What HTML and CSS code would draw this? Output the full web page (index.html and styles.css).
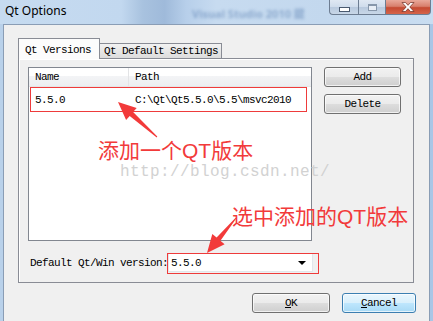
FILE: index.html
```html
<!DOCTYPE html>
<html>
<head>
<meta charset="utf-8">
<link rel="stylesheet" href="styles.css">
</head>
<body>
<div class="window">
  <div class="titlebar">
    <span class="title">Qt Options</span>
    <span class="ghost">Visual Studio 2010 鍵</span>
    <div class="controls">
      <div class="ctl min"><span class="min-glyph"></span></div>
      <div class="ctl max"><span class="max-glyph"></span></div>
      <div class="ctl close">
        <svg width="14" height="10" viewBox="0 0 14 10"><path d="M1 0.5 H4.5 L7 3.3 L9.5 0.5 H13 L8.8 5 L13 9.5 H9.5 L7 6.7 L4.5 9.5 H1 L5.2 5 Z" fill="#fff" stroke="#6b2a20" stroke-width="0.7"/></svg>
      </div>
    </div>
  </div>
  <div class="client">
    <div class="tabwidget">
      <div class="tabbar">
        <div class="tab active">Qt Versions</div>
        <div class="tab">Qt Default Settings</div>
      </div>
      <div class="pane">
        <div class="top-row">
          <div class="list">
            <div class="list-head">
              <div class="hcol c-name">Name</div>
              <div class="hcol c-path">Path</div>
            </div>
            <div class="list-row">
              <div class="c-name">5.5.0</div>
              <div class="c-path">C:\Qt\Qt5.5.0\5.5\msvc2010</div>
            </div>
          </div>
          <div class="side">
            <button class="btn">Add</button>
            <button class="btn">Delete</button>
          </div>
        </div>
        <div class="default-row">
          <span class="label">Default Qt/Win version:</span>
          <div class="combo"><span class="combo-text">5.5.0</span><span class="combo-arrow"></span></div>
        </div>
      </div>
    </div>
    <div class="footer">
      <button class="btn btn-ok"><u>O</u>K</button>
      <button class="btn btn-cancel"><u>C</u>ancel</button>
    </div>
  </div>

  <svg class="overlay" width="433" height="321" viewBox="0 0 433 321">
    <rect x="30.5" y="87.5" width="276" height="24" fill="none" stroke="#ee3b3b" stroke-width="1"/>
    <rect x="167.5" y="253.5" width="151" height="20" fill="none" stroke="#ee3b3b" stroke-width="1"/>
    <polygon fill="#f23a3a" points="118,102 136.7,108.1 133.1,112.1 157.3,136.6 156.7,137.4 129.7,115.9 126.1,119.9"/>
    <polygon fill="#f23a3a" points="207,253 212.3,234.1 216.6,237.6 235.6,217.7 236.4,218.3 220.4,240.8 224.6,244.3"/>
  </svg>
  <div class="note note-1">添加一个QT版本</div>
  <div class="note note-2">选中添加的QT版本</div>
  <div class="watermark">http://blog.csdn.net/</div>
</div>
</body>
</html>
```
FILE: styles.css
```css
html, body {
  margin: 0;
  padding: 0;
}
body {
  background: #f0f0f0;
}
.window {
  position: relative;
  width: 433px;
  height: 321px;
  overflow: hidden;
  background: linear-gradient(90deg, #b9d1ea 0%, #a9c6e6 100%);
}
.titlebar {
  position: relative;
  height: 24px;
  display: flex;
  align-items: flex-start;
  background: linear-gradient(90deg, #c6dbf0 0%, #c2d8ef 28%, #a8c2df 33%, #9fbada 38%, #b7cfea 43%, #c7dbf0 50%, #c3d8ee 75%, #c9ddf1 100%);
}
.title {
  font-family: "Noto Sans", "Open Sans", sans-serif;
  font-size: 12px;
  line-height: 16px;
  margin: 3px 0 0 5px;
  color: #000;
}
.ghost {
  position: absolute;
  left: 192px;
  top: 5px;
  font-family: "Noto Sans", "Noto Sans CJK SC", sans-serif;
  font-size: 11px;
  font-weight: bold;
  color: rgba(40, 85, 150, 0.35);
  filter: blur(1.4px);
}
.controls {
  margin-left: auto;
  margin-right: 2px;
  display: flex;
  height: 15px;
  position: relative;
}
.ctl {
  height: 15px;
  box-sizing: border-box;
  border: 1px solid #6d7d92;
  border-top: none;
  display: flex;
  align-items: center;
  justify-content: center;
}
.min {
  width: 29px;
  border-bottom-left-radius: 4px;
  border-right: none;
  background: linear-gradient(#dfe8f3 0%, #cfdcec 50%, #b8c9de 51%, #c8d7e8 100%);
}
.max {
  width: 27px;
  border-right: none;
  background: linear-gradient(#dfe8f3 0%, #cfdcec 50%, #b8c9de 51%, #c8d7e8 100%);
}
.close {
  width: 46px;
  border-bottom-right-radius: 4px;
  background: linear-gradient(#e9a99a 0%, #d8806d 45%, #c54a32 55%, #d5644a 100%);
}
.min-glyph {
  width: 9px;
  height: 3px;
  margin-top: 4px;
  background: #fff;
  border: 1px solid #4a5a70;
}
.max-glyph {
  width: 7px;
  height: 5px;
  border: 1px solid #8797ab;
  background: #e8eef6;
  box-shadow: inset 0 1px 0 #8797ab;
}
.client {
  margin: 0 3px;
  height: 297px;
  border: 1px solid #8a9db5;
  border-bottom: none;
  background: #f0f0f0;
  padding: 13px 0 0 14px;
  box-sizing: border-box;
  font-family: "Liberation Mono", monospace;
  font-size: 11px;
  letter-spacing: -0.6px;
  color: #000;
}
.tabwidget {
  width: 396px;
}
.tabbar {
  display: flex;
  align-items: flex-end;
  height: 21px;
  margin-bottom: -1px;
  position: relative;
  z-index: 1;
}
.tab {
  box-sizing: border-box;
  border: 1px solid #898c95;
  border-bottom: none;
  white-space: nowrap;
}
.tab.active {
  width: 82px;
  height: 21px;
  background: #fcfcfc;
  padding: 5px 0 0 6px;
}
.tab:not(.active) {
  width: 123px;
  height: 15px;
  margin-left: -1px;
  margin-bottom: 1px;
  background: linear-gradient(#f2f2f2, #dcdcdc);
  padding: 1px 0 0 4px;
  line-height: 13px;
}
.pane {
  box-sizing: border-box;
  height: 225px;
  border: 1px solid #898c95;
  background: #f0f0f0;
  box-shadow: inset 1px 1px 0 #fff;
  padding: 8px 12px 0 9px;
}
.top-row {
  display: flex;
  gap: 12px;
}
.list {
  width: 284px;
  height: 174px;
  box-sizing: border-box;
  border: 1px solid #828790;
  background: #fff;
}
.list-head {
  display: flex;
  height: 18px;
  border-bottom: 1px solid #e5e5e5;
  background: linear-gradient(#ffffff 0%, #ffffff 45%, #f3f4f6 46%, #eceef1 100%);
  line-height: 18px;
}
.hcol {
  box-sizing: border-box;
}
.c-name {
  width: 100px;
  padding-left: 6px;
  box-sizing: border-box;
  border-right: 1px solid #e3e4e6;
}
.list-row .c-name {
  border-right: none;
}
.c-path {
  padding-left: 6px;
  white-space: nowrap;
}
.list-row {
  display: flex;
  height: 22px;
  line-height: 22px;
  margin-top: 2px;
}
.side {
  display: flex;
  flex-direction: column;
  gap: 7px;
}
.btn {
  box-sizing: border-box;
  width: 77px;
  height: 20px;
  border: 1px solid #707070;
  border-radius: 3px;
  background: linear-gradient(#f2f2f2 0%, #ebebeb 48%, #dddddd 52%, #cfcfcf 100%);
  font-family: "Liberation Mono", monospace;
  font-size: 11px;
  letter-spacing: -0.6px;
  color: #000;
  padding: 0;
  margin: 0;
  box-shadow: inset 0 0 0 1px rgba(255, 255, 255, 0.7);
}
.btn u {
  text-decoration: underline;
}
.default-row {
  display: flex;
  align-items: center;
  margin-top: 12px;
  padding-left: 2px;
}
.label {
  white-space: nowrap;
  width: 138px;
}
.combo {
  box-sizing: border-box;
  width: 145px;
  height: 19px;
  border: 1px solid #e2e6eb;
  background: #fff;
  display: flex;
  align-items: center;
  padding: 0 4px 0 2px;
}
.combo-text {
  flex: 1;
}
.combo-arrow {
  width: 0;
  height: 0;
  border-left: 4px solid transparent;
  border-right: 4px solid transparent;
  border-top: 4px solid #000;
  margin-right: 2px;
}
.footer {
  display: flex;
  justify-content: flex-end;
  gap: 12px;
  padding: 10px 13px 0 0;
}
.btn-ok {
  width: 78px;
}
.btn-cancel {
  width: 74px;
  border-color: #3c7fb1;
  background: linear-gradient(#eaf6fd 0%, #d9f0fc 48%, #bee6fd 52%, #a7d9f5 100%);
}
.overlay {
  position: absolute;
  left: 0;
  top: 0;
  pointer-events: none;
}
.note {
  position: absolute;
  font-family: "Liberation Sans", "Noto Sans CJK SC", sans-serif;
  font-size: 21px;
  line-height: 20px;
  color: #f23a3a;
  white-space: nowrap;
}
.note-1 {
  left: 98px;
  top: 141px;
}
.note-2 {
  left: 232px;
  top: 207px;
}
.watermark {
  position: absolute;
  left: 120px;
  top: 164px;
  font-family: "Liberation Mono", monospace;
  font-size: 16px;
  line-height: 16px;
  letter-spacing: 0.4px;
  color: #d2d2d2;
  white-space: nowrap;
}
```
